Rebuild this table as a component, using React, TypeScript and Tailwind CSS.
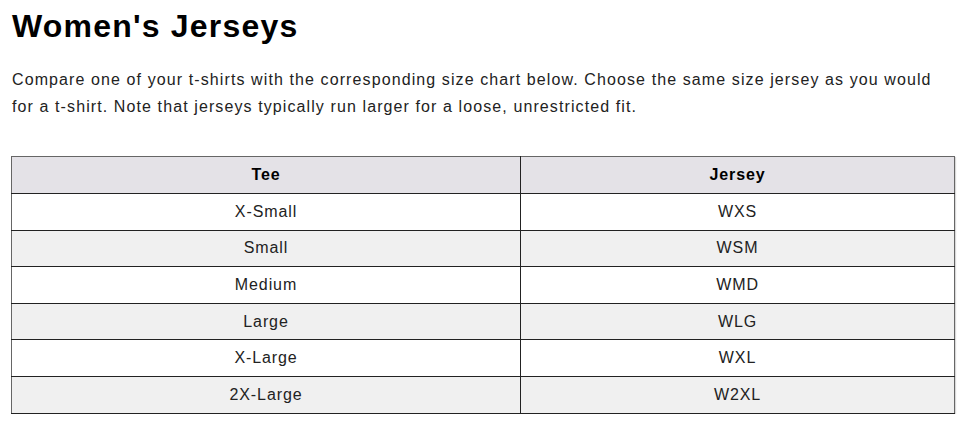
const rows = [
  ['X-Small', 'WXS'],
  ['Small', 'WSM'],
  ['Medium', 'WMD'],
  ['Large', 'WLG'],
  ['X-Large', 'WXL'],
  ['2X-Large', 'W2XL'],
];

export default function App() {
  return (
    <div className="bg-white px-3 pt-[6px] text-[#222]" style={{ fontFamily: '"Liberation Sans", Arial, sans-serif' }}>
      <h1 className="text-[32px] font-bold leading-[40px] tracking-[1.2px] text-black">Women's Jerseys</h1>
      <p className="mt-[20px] max-w-[944px] text-[16px] leading-[27px] tracking-[1.1px]">
        Compare one of your t-shirts with the corresponding size chart below. Choose the same size jersey as you would for a t-shirt. Note that jerseys typically run larger for a loose, unrestricted fit.
      </p>
      <table className="mt-[36px] w-[944px] -ml-px border-collapse border border-[#666] text-[16px] tracking-[0.9px] shadow-[1px_1px_1px_rgba(0,0,0,0.15)]">
        <thead>
          <tr className="h-[37px] bg-[#e4e2e7]">
            <th className="w-[509px] border-b border-r border-[#222] font-bold text-black">Tee</th>
            <th className="border-b border-[#222] font-bold text-black">Jersey</th>
          </tr>
        </thead>
        <tbody>
          {rows.map(([tee, jersey], i) => (
            <tr key={tee} className={`h-[36.6px] ${i % 2 === 0 ? 'bg-white' : 'bg-[#f0f0f0]'}`}>
              <td className="border-b border-r border-[#222] text-center">{tee}</td>
              <td className="border-b border-[#222] text-center">{jersey}</td>
            </tr>
          ))}
        </tbody>
      </table>
    </div>
  );
}
